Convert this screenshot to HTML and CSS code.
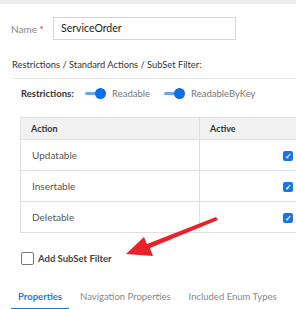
FILE: index.html
```html
<!DOCTYPE html>
<html lang="en">
<head>
  <meta charset="UTF-8">
  <meta name="viewport" content="width=device-width, initial-scale=1.0">
  <title>Entity</title>
  <link rel="stylesheet" href="styles.css">
</head>
<body>
  <div class="topbar"></div>
  <div class="name-row">
    <label class="name-label">Name <span class="req">*</span></label>
    <div class="name-input">ServiceOrder</div>
  </div>
  <div class="section-title">Restrictions / Standard Actions / SubSet Filter:</div>
  <div class="restrictions">
    <span class="restr-label">Restrictions:</span>
    <span class="toggle"><span class="knob"></span></span>
    <span class="toggle-text">Readable</span>
    <span class="toggle"><span class="knob"></span></span>
    <span class="toggle-text">ReadableByKey</span>
  </div>
  <table class="actions">
    <tr>
      <th class="col-action">Action</th>
      <th class="col-active">Active</th>
    </tr>
    <tr>
      <td>Updatable</td>
      <td class="check-cell"><span class="check on">&#10003;</span></td>
    </tr>
    <tr>
      <td>Insertable</td>
      <td class="check-cell"><span class="check on">&#10003;</span></td>
    </tr>
    <tr>
      <td>Deletable</td>
      <td class="check-cell"><span class="check on">&#10003;</span></td>
    </tr>
  </table>
  <div class="subset">
    <span class="check off"></span>
    <span class="subset-text">Add SubSet Filter</span>
  </div>
  <div class="tabs">
    <span class="tab active">Properties</span>
    <span class="tab">Navigation Properties</span>
    <span class="tab">Included Enum Types</span>
  </div>
  <svg class="arrow" width="296" height="309" viewBox="0 0 296 309">
    <polygon points="216,217 218,220 150,248 153,256 126,254 144,237 147,244" fill="#e8212b"/>
  </svg>
</body>
</html>
```

FILE: styles.css
```css
body {
  margin: 0;
  width: 296px;
  height: 309px;
  overflow: hidden;
  background: #fff;
  font-family: Lato, "Noto Sans", sans-serif;
  color: #333;
  position: relative;
}

.topbar {
  height: 4px;
  background: #ececec;
}

.name-row {
  display: flex;
  align-items: center;
  padding: 13px 0 0 11px;
}

.name-label {
  font-size: 10px;
  color: #888;
  width: 42px;
}

.req {
  color: #e0262b;
}

.name-input {
  width: 174px;
  height: 21px;
  border: 1px solid #d6d6d6;
  padding-left: 7px;
  font-size: 10.5px;
  line-height: 21px;
  color: #222;
}

.section-title {
  margin: 19px 0 0 12px;
  font-size: 9.3px;
  color: #333;
  padding-bottom: 8px;
  border-bottom: 1px solid #e6e6e6;
}

.restrictions {
  display: flex;
  align-items: center;
  padding: 9px 0 0 21px;
  font-size: 9.5px;
}

.restr-label {
  font-weight: 700;
  color: #333;
  width: 64px;
}

.toggle {
  position: relative;
  width: 16px;
  height: 3px;
  background: #6aa6ef;
  border-radius: 2px;
  margin-right: 11px;
}

.knob {
  position: absolute;
  right: -5px;
  top: -4px;
  width: 11px;
  height: 11px;
  border-radius: 50%;
  background: #0a6fe8;
}

.toggle-text {
  color: #777;
  margin-right: 14px;
}

.actions {
  margin: 18px 0 0 20px;
  width: 279px;
  table-layout: fixed;
  border-collapse: collapse;
  font-size: 10px;
}

.actions th {
  background: #f2f2f2;
  font-weight: 700;
  font-size: 9px;
  text-align: left;
  height: 21px;
  padding: 0 0 0 10px;
  border: 1px solid #e0e0e0;
  color: #333;
}

.col-action {
  width: 168px;
}

.actions td {
  height: 30px;
  padding: 0 0 0 11px;
  border: 1px solid #e0e0e0;
  color: #555;
}

.actions td.check-cell {
  text-align: right;
  padding-right: 5px;
}

.check {
  display: inline-flex;
  align-items: center;
  justify-content: center;
  width: 10px;
  height: 10px;
  border-radius: 2px;
  font-size: 8px;
  font-weight: 700;
  line-height: 1;
  vertical-align: middle;
}

.check.on {
  background: #1a73e8;
  color: #fff;
}

.check.off {
  width: 11px;
  height: 11px;
  border: 1px solid #777;
  background: #fff;
}

.subset {
  display: flex;
  align-items: center;
  gap: 4px;
  padding: 19px 0 0 21px;
  font-size: 9.5px;
}

.subset-text {
  font-weight: 700;
  color: #444;
}

.tabs {
  display: flex;
  margin-top: 26px;
  padding-left: 11px;
  border-bottom: 1px solid #e6e6e6;
  font-size: 9.5px;
}

.tab {
  padding: 0 7px 6px 7px;
  margin-right: 4px;
  color: #888;
}

.tab.active {
  color: #1f7ae0;
  font-weight: 700;
  border-bottom: 2px solid #1f7ae0;
}

.arrow {
  position: absolute;
  left: 0;
  top: 0;
}
```
